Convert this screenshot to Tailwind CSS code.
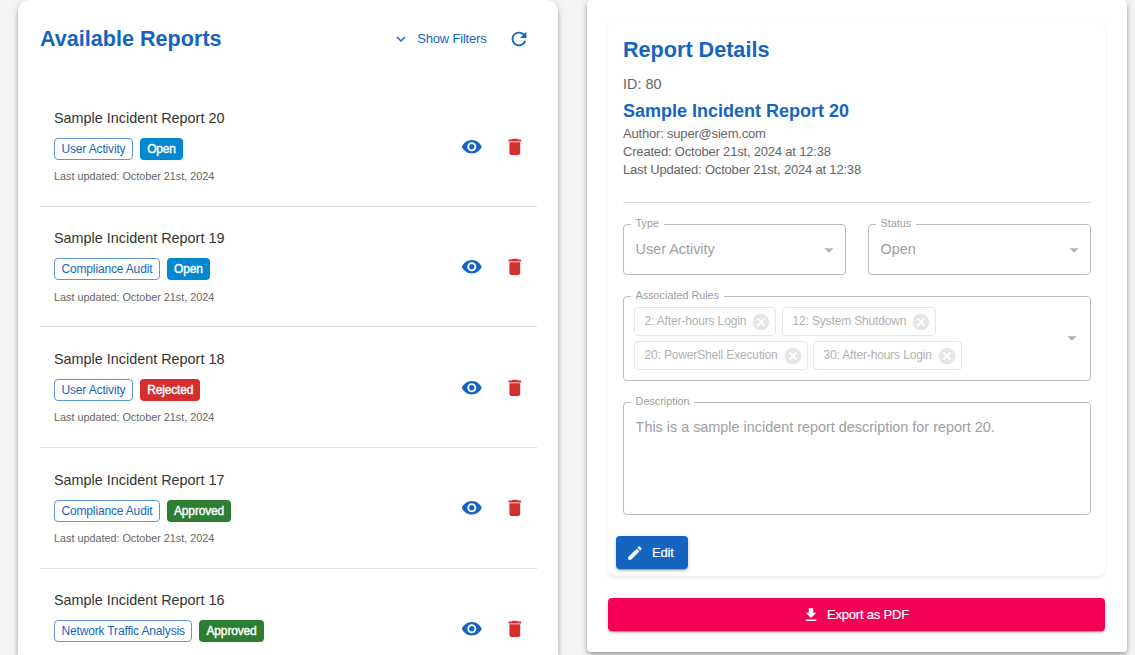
<!DOCTYPE html>
<html lang="en">
<head>
<meta charset="utf-8">
<title>Incident Reports</title>
<script src="https://cdn.jsdelivr.net/npm/@tailwindcss/browser@4"></script>
</head>
<body class="h-[655px] overflow-hidden bg-[#f4f4f4] font-['Liberation_Sans',Arial,sans-serif] text-[#333]">
<svg class="hidden">
  <symbol id="eye" viewBox="0 0 24 24"><path fill="currentColor" d="M12 4.5C7 4.5 2.73 7.61 1 12c1.73 4.39 6 7.5 11 7.5s9.27-3.11 11-7.5c-1.73-4.39-6-7.5-11-7.5M12 17c-2.76 0-5-2.24-5-5s2.24-5 5-5 5 2.24 5 5-2.24 5-5 5m0-8c-1.66 0-3 1.34-3 3s1.34 3 3 3 3-1.34 3-3-1.34-3-3-3"/></symbol>
  <symbol id="trash" viewBox="0 0 24 24"><path fill="currentColor" d="M6 19c0 1.100.9 2 2 2h8c1.100 0 2-.9 2-2V7H6zM19 4h-3.500l-1-1h-5l-1 1H5v2h14z"/></symbol>
  <symbol id="refresh" viewBox="0 0 24 24"><path fill="currentColor" d="M17.650 6.350C16.200 4.900 14.210 4 12 4c-4.420 0-7.990 3.580-7.990 8s3.570 8 7.990 8c3.730 0 6.840-2.550 7.730-6h-2.080c-.82 2.330-3.040 4-5.650 4-3.310 0-6-2.690-6-6s2.690-6 6-6c1.660 0 3.140.69 4.220 1.780L13 11h7V4z"/></symbol>
  <symbol id="chevron" viewBox="0 0 24 24"><path fill="currentColor" d="M7.410 8.590 12 13.170l4.590-4.580L18 10l-6 6-6-6z"/></symbol>
  <symbol id="caret" viewBox="0 0 24 24"><path fill="currentColor" d="m7 10 5 5 5-5z"/></symbol>
  <symbol id="cancel" viewBox="0 0 24 24"><path fill="currentColor" d="M12 2C6.470 2 2 6.470 2 12s4.470 10 10 10 10-4.470 10-10S17.530 2 12 2m5 13.590L15.590 17 12 13.410 8.410 17 7 15.590 10.590 12 7 8.410 8.410 7 12 10.590 15.590 7 17 8.410 13.410 12z"/></symbol>
  <symbol id="pencil" viewBox="0 0 24 24"><path fill="currentColor" d="M3 17.250V21h3.750L17.810 9.940l-3.750-3.750zM20.710 7.040c.39-.39.39-1.020 0-1.410l-2.340-2.340a.9959.9959 0 0 0-1.410 0l-1.830 1.830 3.750 3.750z"/></symbol>
  <symbol id="download" viewBox="0 0 24 24"><path fill="currentColor" d="M5 20h14v-2H5zM19 9h-4V3H9v6H5l7 7z"/></symbol>
</svg>

<div class="flex h-[655px] items-start gap-[29px] pl-[18px]">
  <section class="h-full w-[540px] shrink-0 rounded-t-[11px] bg-white pl-[22px] pr-[21px] shadow-[0_2px_4px_-1px_rgba(0,0,0,0.2),0_4px_5px_rgba(0,0,0,0.14),0_1px_9px_rgba(0,0,0,0.12)]">
    <header class="flex h-[86px] items-start pt-[22px]">
      <h1 class="pt-px text-[21.6px] font-bold leading-[32px] text-[#1565c0]">Available Reports</h1>
      <div class="ml-auto flex h-[33px] items-center text-[#1565c0]">
        <svg class="mr-[7px] size-[18px]"><use href="#chevron"/></svg>
        <span class="text-[13px] tracking-[-0.19px]">Show Filters</span>
        <svg class="ml-[21px] mr-[7.5px] size-[22px]"><use href="#refresh"/></svg>
      </div>
    </header>
    <ul>
      <li class="flex h-[121px] items-start border-b border-black/12 pl-[14px]">
        <div class="pt-[21px]">
          <h2 class="text-[14.4px] leading-[22px]">Sample Incident Report 20</h2>
          <div class="mt-[9px] flex gap-[7px] text-[12px] tracking-[-0.16px] leading-[20px]">
            <span class="h-[22px] rounded-[4px] border border-[#5c98d8] px-[6.5px] text-[#1565c0]">User Activity</span>
            <span class="h-[22px] rounded-[4px] bg-[#0288d1] px-[7.2px] py-px text-white [-webkit-text-stroke:0.4px_white]">Open</span>
          </div>
          <p class="mt-[7px] text-[10.8px] leading-[18px] text-[#666]">Last updated: October 21st, 2024</p>
        </div>
        <div class="ml-auto mr-[11px] flex gap-[21.4px] pt-[49.7px]">
          <svg class="size-[21.6px] text-[#1565c0]"><use href="#eye"/></svg>
          <svg class="size-[21.6px] text-[#d32f2f]"><use href="#trash"/></svg>
        </div>
      </li>
      <li class="flex h-[120px] items-start border-b border-black/12 pl-[14px]">
        <div class="pt-[20px]">
          <h2 class="text-[14.4px] leading-[22px]">Sample Incident Report 19</h2>
          <div class="mt-[9px] flex gap-[7px] text-[12px] tracking-[-0.16px] leading-[20px]">
            <span class="h-[22px] rounded-[4px] border border-[#5c98d8] px-[6.5px] text-[#1565c0]">Compliance Audit</span>
            <span class="h-[22px] rounded-[4px] bg-[#0288d1] px-[7.2px] py-px text-white [-webkit-text-stroke:0.4px_white]">Open</span>
          </div>
          <p class="mt-[8px] text-[10.8px] leading-[18px] text-[#666]">Last updated: October 21st, 2024</p>
        </div>
        <div class="ml-auto mr-[11px] flex gap-[21.4px] pt-[49px]">
          <svg class="size-[21.6px] text-[#1565c0]"><use href="#eye"/></svg>
          <svg class="size-[21.6px] text-[#d32f2f]"><use href="#trash"/></svg>
        </div>
      </li>
      <li class="flex h-[121px] items-start border-b border-black/12 pl-[14px]">
        <div class="pt-[21px]">
          <h2 class="text-[14.4px] leading-[22px]">Sample Incident Report 18</h2>
          <div class="mt-[9px] flex gap-[7px] text-[12px] tracking-[-0.16px] leading-[20px]">
            <span class="h-[22px] rounded-[4px] border border-[#5c98d8] px-[6.5px] text-[#1565c0]">User Activity</span>
            <span class="h-[22px] rounded-[4px] bg-[#d32f2f] px-[7.2px] py-px text-white [-webkit-text-stroke:0.4px_white]">Rejected</span>
          </div>
          <p class="mt-[7px] text-[10.8px] leading-[18px] text-[#666]">Last updated: October 21st, 2024</p>
        </div>
        <div class="ml-auto mr-[11px] flex gap-[21.4px] pt-[49.7px]">
          <svg class="size-[21.6px] text-[#1565c0]"><use href="#eye"/></svg>
          <svg class="size-[21.6px] text-[#d32f2f]"><use href="#trash"/></svg>
        </div>
      </li>
      <li class="flex h-[121px] items-start border-b border-black/12 pl-[14px]">
        <div class="pt-[21px]">
          <h2 class="text-[14.4px] leading-[22px]">Sample Incident Report 17</h2>
          <div class="mt-[9px] flex gap-[7px] text-[12px] tracking-[-0.16px] leading-[20px]">
            <span class="h-[22px] rounded-[4px] border border-[#5c98d8] px-[6.5px] text-[#1565c0]">Compliance Audit</span>
            <span class="h-[22px] rounded-[4px] bg-[#2e7d32] px-[7.2px] py-px text-white [-webkit-text-stroke:0.4px_white]">Approved</span>
          </div>
          <p class="mt-[7px] text-[10.8px] leading-[18px] text-[#666]">Last updated: October 21st, 2024</p>
        </div>
        <div class="ml-auto mr-[11px] flex gap-[21.4px] pt-[49px]">
          <svg class="size-[21.6px] text-[#1565c0]"><use href="#eye"/></svg>
          <svg class="size-[21.6px] text-[#d32f2f]"><use href="#trash"/></svg>
        </div>
      </li>
      <li class="flex items-start pl-[14px]">
        <div class="pt-[20px]">
          <h2 class="text-[14.4px] leading-[22px]">Sample Incident Report 16</h2>
          <div class="mt-[9px] flex gap-[7px] text-[12px] tracking-[-0.16px] leading-[20px]">
            <span class="h-[22px] rounded-[4px] border border-[#5c98d8] px-[6.5px] text-[#1565c0]">Network Traffic Analysis</span>
            <span class="h-[22px] rounded-[4px] bg-[#2e7d32] px-[7.2px] py-px text-white [-webkit-text-stroke:0.4px_white]">Approved</span>
          </div>
        </div>
        <div class="ml-auto mr-[11px] flex gap-[21.4px] pt-[49px]">
          <svg class="size-[21.6px] text-[#1565c0]"><use href="#eye"/></svg>
          <svg class="size-[21.6px] text-[#d32f2f]"><use href="#trash"/></svg>
        </div>
      </li>
    </ul>
  </section>

  <section class="h-[652px] w-[540px] shrink-0 rounded-[4px] bg-white pl-[21px] pr-[22px] pt-[21px] shadow-[0_2px_4px_-1px_rgba(0,0,0,0.2),0_4px_5px_rgba(0,0,0,0.14),0_1px_9px_rgba(0,0,0,0.12)]">
    <div class="h-[555px] rounded-[8px] pl-[15px] pr-[14px] pt-[13px] shadow-[0_2px_4px_rgba(0,0,0,0.08)]">
      <h1 class="text-[21.6px] font-bold leading-[32px] text-[#1565c0]">Report Details</h1>
      <p class="mt-[7px] text-[14.4px] leading-[22px] text-[#666]">ID: 80</p>
      <h2 class="mt-[2px] text-[18px] font-bold leading-[28px] text-[#1565c0]">Sample Incident Report 20</h2>
      <div class="text-[13px] leading-[18px] tracking-[-0.19px] text-[#666]">
        <p>Author: super@siem.com</p>
        <p>Created: October 21st, 2024 at 12:38</p>
        <p>Last Updated: October 21st, 2024 at 12:38</p>
      </div>
      <hr class="mt-[23px] border-black/12">
      <div class="mt-[21px] flex gap-[22px] text-[14.4px] text-[#9e9e9e]">
        <div class="relative flex h-[51px] w-[223px] items-center rounded-[4px] border border-[#bdbdbd] pl-[11.6px] pr-[5px]">
          <span class="absolute left-[7px] top-[-10px] bg-white px-[4.6px] text-[10.8px] leading-[16px]">Type</span>
          <span>User Activity</span>
          <svg class="ml-auto size-[22px] text-[#b3b3b3]"><use href="#caret"/></svg>
        </div>
        <div class="relative flex h-[51px] w-[223px] items-center rounded-[4px] border border-[#bdbdbd] pl-[11.6px] pr-[5px]">
          <span class="absolute left-[7px] top-[-10px] bg-white px-[4.6px] text-[10.8px] leading-[16px]">Status</span>
          <span>Open</span>
          <svg class="ml-auto size-[22px] text-[#b3b3b3]"><use href="#caret"/></svg>
        </div>
      </div>
      <div class="relative mt-[21px] flex h-[85px] items-center rounded-[4px] border border-[#bdbdbd] pl-[10px] pr-[7.5px] text-[#9e9e9e]">
        <span class="absolute left-[7px] top-[-10px] bg-white px-[4.6px] text-[10.8px] leading-[16px]">Associated Rules</span>
        <div class="flex flex-col gap-[5px] text-[12px] leading-[27px] tracking-[-0.15px] text-[#b1b1b1]">
          <div class="flex gap-[6px]">
            <span class="flex h-[29px] w-[142px] items-center justify-between rounded-[4px] border border-[#e5e5e5] pl-[9.5px] pr-[4.5px]">2: After-hours Login<svg class="size-[20px] text-[#e6e6e6]"><use href="#cancel"/></svg></span>
            <span class="flex h-[29px] w-[154px] items-center justify-between rounded-[4px] border border-[#e5e5e5] pl-[9.5px] pr-[4.5px]">12: System Shutdown<svg class="size-[20px] text-[#e6e6e6]"><use href="#cancel"/></svg></span>
          </div>
          <div class="flex gap-[5px]">
            <span class="flex h-[29px] w-[174px] items-center justify-between rounded-[4px] border border-[#e5e5e5] pl-[9.5px] pr-[4.5px]">20: PowerShell Execution<svg class="size-[20px] text-[#e6e6e6]"><use href="#cancel"/></svg></span>
            <span class="flex h-[29px] w-[149px] items-center justify-between rounded-[4px] border border-[#e5e5e5] pl-[9.5px] pr-[4.5px]">30: After-hours Login<svg class="size-[20px] text-[#e6e6e6]"><use href="#cancel"/></svg></span>
          </div>
        </div>
        <svg class="mb-px ml-auto size-[22px] text-[#b3b3b3]"><use href="#caret"/></svg>
      </div>
      <div class="relative mt-[21px] h-[113px] rounded-[4px] border border-[#bdbdbd] pl-[11.6px] pt-[14px] text-[#9e9e9e]">
        <span class="absolute left-[7px] top-[-10px] bg-white px-[4.6px] text-[10.8px] leading-[16px]">Description</span>
        <p class="text-[14.4px] leading-[21px]">This is a sample incident report description for report 20.</p>
      </div>
      <button class="-ml-[7px] mt-[21px] flex h-[33px] w-[72px] items-center rounded-[4px] bg-[#1565c0] pl-[10px] text-[13px] tracking-[-0.19px] text-white shadow-[0_3px_1px_-2px_rgba(0,0,0,0.2),0_2px_2px_rgba(0,0,0,0.14),0_1px_5px_rgba(0,0,0,0.12)] [-webkit-text-stroke:0.2px_white]">
        <svg class="mr-[8px] size-[18px]"><use href="#pencil"/></svg>Edit
      </button>
    </div>
    <button class="mt-[22px] flex h-[33px] w-full items-center justify-center rounded-[4px] bg-[#f50057] pr-[2px] text-[13px] tracking-[-0.19px] text-white shadow-[0_3px_1px_-2px_rgba(0,0,0,0.2),0_2px_2px_rgba(0,0,0,0.14),0_1px_5px_rgba(0,0,0,0.12)] [-webkit-text-stroke:0.2px_white]">
      <svg class="mr-[7px] size-[18px]"><use href="#download"/></svg>Export as PDF
    </button>
  </section>
</div>
</body>
</html>
